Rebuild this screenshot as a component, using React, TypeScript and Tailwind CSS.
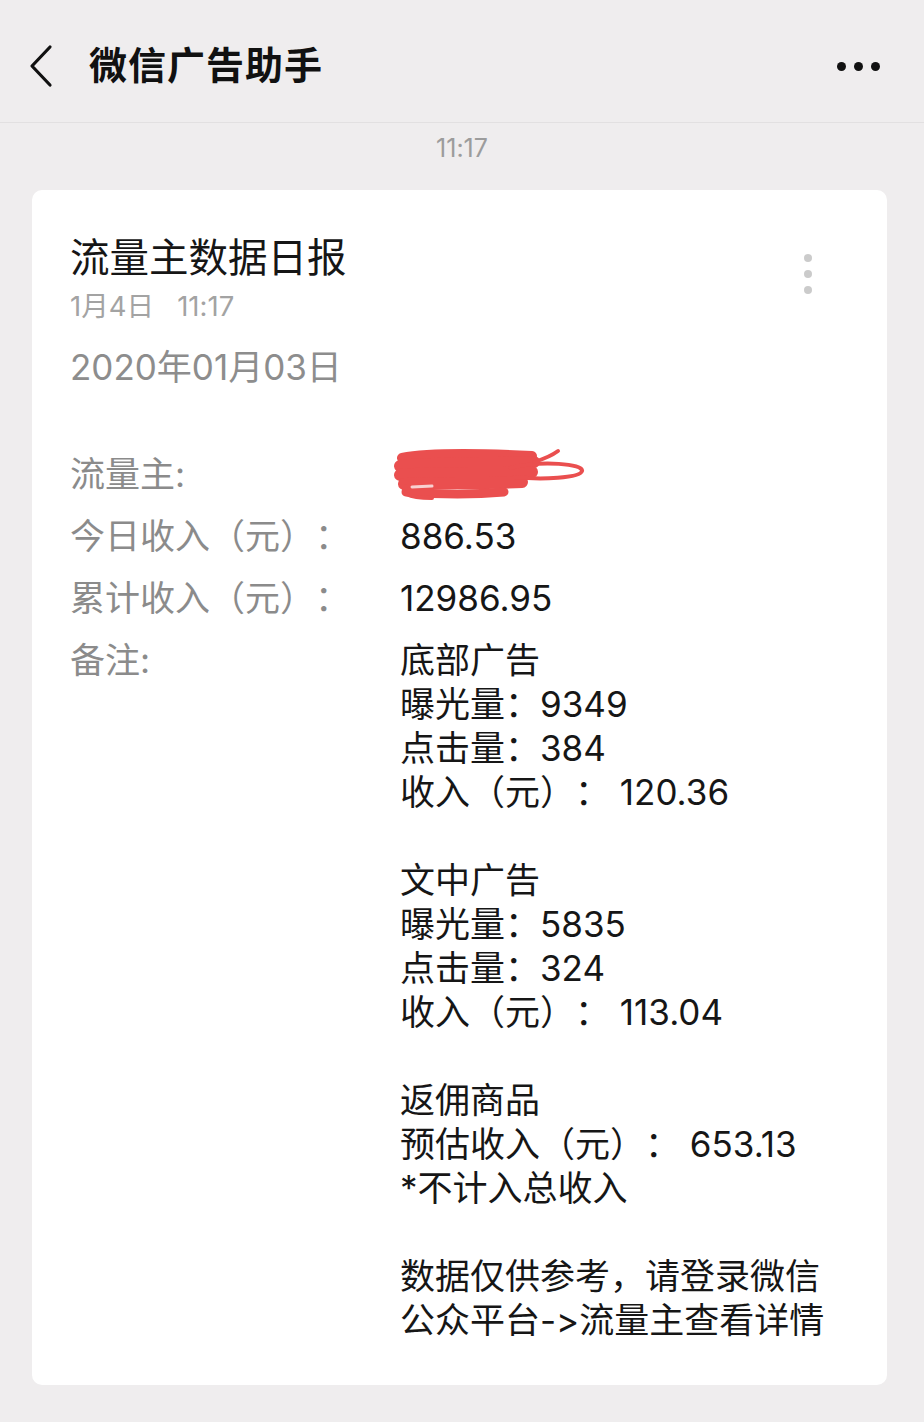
import React from "react";

const FONT = { fontFamily: '"Inter", "Noto Sans CJK SC", sans-serif' };

function Scribble() {
  return (
    <svg width="200" height="60" viewBox="0 0 200 60" className="absolute left-[-8px] top-[-6px]">
      <g fill="none" stroke="#ea4f4f" strokeLinecap="round" strokeLinejoin="round">
        <path d="M10 12 C 40 6, 100 8, 140 10" strokeWidth="10" />
        <path d="M8 20 C 50 16, 100 18, 142 16" strokeWidth="12" />
        <path d="M8 29 C 40 26, 100 28, 140 26" strokeWidth="12" />
        <path d="M12 38 C 40 36, 90 38, 130 36" strokeWidth="12" />
        <path d="M14 46 C 40 48, 80 49, 112 46" strokeWidth="9" />
        <path d="M14 40 C 8 46, 14 52, 40 52" strokeWidth="4" />
        <path d="M118 22 C 150 14, 192 18, 190 25 C 188 32, 150 34, 122 31" strokeWidth="4" />
        <path d="M142 16 C 155 12, 162 8, 166 5" strokeWidth="4" />
      </g>
      <path d="M20 41 L 40 40" stroke="#f8d0d0" strokeWidth="3" strokeLinecap="round" />
    </svg>
  );
}

export default function App() {
  const remarks: string[] = [
    "底部广告",
    "曝光量：9349",
    "点击量：384",
    "收入（元）： 120.36",
    "",
    "文中广告",
    "曝光量：5835",
    "点击量：324",
    "收入（元）： 113.04",
    "",
    "返佣商品",
    "预估收入（元）： 653.13",
    "*不计入总收入",
    "",
    "数据仅供参考，请登录微信",
    "公众平台->流量主查看详情",
  ];
  return (
    <div
      className="min-h-[1422px] w-[924px] bg-[#efedee] [text-spacing-trim:space-all] [font-feature-settings:'calt'_0,'liga'_0]"
      style={FONT}
    >
      <header className="relative flex h-[123px] items-center border-b border-[#e2e0e1]">
        <svg width="40" height="50" viewBox="0 0 40 50" className="absolute left-[22px] top-[42px]">
          <path d="M28 5 L10 24 L28 43" fill="none" stroke="#111" strokeWidth="3.2" strokeLinecap="round" strokeLinejoin="round" />
        </svg>
        <div className="ml-[89px] mt-[8px] text-[38px] font-bold leading-none tracking-[1px] text-[#111]">
          微信广告助手
        </div>
        <div className="absolute left-[837px] top-[62px] flex gap-[8px]">
          <span className="block h-[9px] w-[9px] rounded-full bg-[#111]" />
          <span className="block h-[9px] w-[9px] rounded-full bg-[#111]" />
          <span className="block h-[9px] w-[9px] rounded-full bg-[#111]" />
        </div>
      </header>
      <div className="flex h-[67px] justify-center pt-[13px] text-[25px] leading-[24px] text-[#9c9c9c]">
        11:17
      </div>
      <div className="relative mx-[32px] w-[855px] rounded-[10px] bg-white pb-[43px] pl-[38px] pt-[43px]">
        <div className="absolute left-[772px] top-[64px] flex flex-col gap-[8px]">
          <span className="block h-[8px] w-[8px] rounded-full bg-[#cbcbcb]" />
          <span className="block h-[8px] w-[8px] rounded-full bg-[#cbcbcb]" />
          <span className="block h-[8px] w-[8px] rounded-full bg-[#cbcbcb]" />
        </div>
        <div className="text-[39.5px] leading-[50px] text-[#161616]">流量主数据日报</div>
        <div className="mt-[8px] text-[27.5px] leading-[30px] text-[#a3a3a3]">
          1月4日&nbsp;&nbsp;&nbsp;11:17
        </div>
        <div className="mt-[26px] text-[35px] leading-[40px] text-[#8d8d8d]">2020年01月03日</div>
        <div className="mt-[65px] grid grid-cols-[330px_1fr] gap-y-[18px] text-[35px] leading-[44px]">
          <div className="text-[#8b8b8b]">流量主:</div>
          <div className="relative h-[44px]">
            <Scribble />
          </div>
          <div className="text-[#8b8b8b]">今日收入（元）：</div>
          <div className="text-[#161616]">886.53</div>
          <div className="text-[#8b8b8b]">累计收入（元）：</div>
          <div className="text-[#161616]">12986.95</div>
          <div className="text-[#8b8b8b]">备注:</div>
          <div className="flex flex-col text-[#161616]">
            {remarks.map((r, i) => (
              <div key={i} className="h-[44px] whitespace-pre">
                {r}
              </div>
            ))}
          </div>
        </div>
      </div>
    </div>
  );
}
